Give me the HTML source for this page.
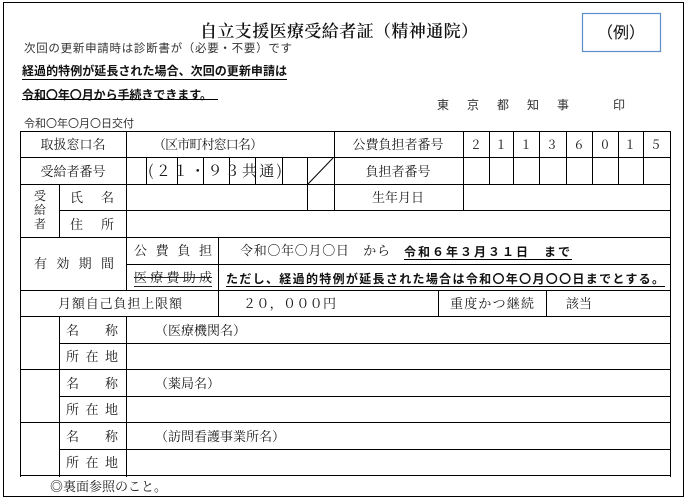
<!DOCTYPE html>
<html><head><meta charset="utf-8"><style>
html,body{margin:0;padding:0;background:#fff;width:691px;height:500px;overflow:hidden}
svg{display:block}
.m{font-family:"Noto Serif CJK SC","Noto Serif CJK JP",serif;font-size:13px;fill:#1a1a1a}
.g{font-family:"Liberation Sans","Noto Sans CJK JP",sans-serif;font-size:12px;font-weight:bold;fill:#111}
.s{font-family:"Liberation Sans","Noto Sans CJK JP",sans-serif;font-size:11.5px;fill:#333}
</style></head><body>
<svg width="691" height="500" viewBox="0 0 691 500" xmlns="http://www.w3.org/2000/svg">
<rect x="3.5" y="2.5" width="680" height="494" fill="none" stroke="#000" stroke-width="1"/>
<rect x="582.5" y="13.5" width="78" height="38" fill="none" stroke="#5b8fcc" stroke-width="1.2"/>
<text x="621" y="38" text-anchor="middle" style="font-family:'Noto Sans CJK JP',sans-serif;font-size:16px;fill:#111">（例）</text>
<text x="339" y="37" text-anchor="middle" class="m" style="font-size:17px;font-weight:600;fill:#111" textLength="278">自立支援医療受給者証（精神通院）</text>
<text x="24" y="52" class="s" textLength="268">次回の更新申請時は診断書が（必要・不要）です</text>
<text x="22" y="75" class="g" textLength="265">経過的特例が延長された場合、次回の更新申請は</text>
<line x1="22" y1="79.5" x2="287" y2="79.5" stroke="#000"/>
<text x="22" y="99" class="g" textLength="190">令和〇年〇月から手続きできます。</text>
<line x1="22" y1="99.5" x2="218" y2="99.5" stroke="#000"/>
<text x="437" y="109" class="s" style="font-size:12px" textLength="132">東 京 都 知 事</text>
<text x="613" y="109" class="s" style="font-size:12px">印</text>
<text x="24" y="127" class="s" style="font-size:11px">令和〇年〇月〇日交付</text>
<g stroke="#000" stroke-width="1" shape-rendering="crispEdges">
<line x1="20" y1="131.5" x2="670" y2="131.5"/>
<line x1="20" y1="157.5" x2="670" y2="157.5"/>
<line x1="20" y1="184.5" x2="670" y2="184.5"/>
<line x1="59" y1="210.5" x2="670" y2="210.5"/>
<line x1="20" y1="237.5" x2="670" y2="237.5"/>
<line x1="126" y1="264.5" x2="670" y2="264.5"/>
<line x1="20" y1="290.5" x2="670" y2="290.5"/>
<line x1="20" y1="316.5" x2="670" y2="316.5"/>
<line x1="59" y1="343.5" x2="670" y2="343.5"/>
<line x1="20" y1="369.5" x2="670" y2="369.5"/>
<line x1="59" y1="396.5" x2="670" y2="396.5"/>
<line x1="20" y1="422.5" x2="670" y2="422.5"/>
<line x1="59" y1="449.5" x2="670" y2="449.5"/>
<line x1="20" y1="475.5" x2="670" y2="475.5"/>
<line x1="20.5" y1="131" x2="20.5" y2="477"/>
<line x1="670.5" y1="131" x2="670.5" y2="477"/>
<line x1="126.5" y1="131" x2="126.5" y2="290"/>
<line x1="126.5" y1="316" x2="126.5" y2="477"/>
<line x1="59.5" y1="184" x2="59.5" y2="237"/>
<line x1="59.5" y1="316" x2="59.5" y2="477"/>
<line x1="146.5" y1="157" x2="146.5" y2="184"/>
<line x1="177.5" y1="157" x2="177.5" y2="184"/>
<line x1="203.5" y1="157" x2="203.5" y2="184"/>
<line x1="229.5" y1="157" x2="229.5" y2="184"/>
<line x1="255.5" y1="157" x2="255.5" y2="184"/>
<line x1="282.5" y1="157" x2="282.5" y2="184"/>
<line x1="307.5" y1="157" x2="307.5" y2="210"/>
<line x1="334.5" y1="131" x2="334.5" y2="210"/>
<line x1="463.5" y1="131" x2="463.5" y2="210"/>
<line x1="489.5" y1="131" x2="489.5" y2="184"/>
<line x1="513.5" y1="131" x2="513.5" y2="184"/>
<line x1="539.5" y1="131" x2="539.5" y2="184"/>
<line x1="566.5" y1="131" x2="566.5" y2="184"/>
<line x1="592.5" y1="131" x2="592.5" y2="184"/>
<line x1="618.5" y1="131" x2="618.5" y2="184"/>
<line x1="643.5" y1="131" x2="643.5" y2="184"/>
<line x1="218.5" y1="237" x2="218.5" y2="316"/>
<line x1="438.5" y1="290" x2="438.5" y2="316"/>
<line x1="546.5" y1="290" x2="546.5" y2="316"/>
</g>
<line x1="308" y1="184" x2="333" y2="158" stroke="#000"/>
<g class="m">
<text x="73" y="149" text-anchor="middle">取扱窓口名</text>
<text x="153" y="149" textLength="110">（区市町村窓口名）</text>
<text x="398" y="149" text-anchor="middle">公費負担者番号</text>
<text x="476" y="149" text-anchor="middle">2</text><text x="501" y="149" text-anchor="middle">1</text>
<text x="526" y="149" text-anchor="middle">1</text><text x="552" y="149" text-anchor="middle">3</text>
<text x="579" y="149" text-anchor="middle">6</text><text x="605" y="149" text-anchor="middle">0</text>
<text x="630" y="149" text-anchor="middle">1</text><text x="656" y="149" text-anchor="middle">5</text>
<text x="73" y="176" text-anchor="middle">受給者番号</text>
<text x="148" y="176" style="font-size:15px" textLength="134">(２１・９３共通)</text>
<text x="398" y="176" text-anchor="middle">負担者番号</text>
<text x="40" y="200" text-anchor="middle" style="font-size:12px">受</text>
<text x="40" y="214" text-anchor="middle" style="font-size:12px">給</text>
<text x="40" y="228" text-anchor="middle" style="font-size:12px">者</text>
<text x="70" y="202" textLength="44">氏　名</text>
<text x="398" y="202" text-anchor="middle">生年月日</text>
<text x="70" y="229" textLength="44">住　所</text>
<text x="34" y="268" textLength="80">有 効 期 間</text>
<text x="134" y="255" textLength="78">公 費 負 担</text>
<text x="134" y="282" textLength="78">医療費助成</text>
<text x="240" y="255" textLength="150">令和〇年〇月〇日　から</text>
<text x="58" y="308" textLength="124">月額自己負担上限額</text>
<text x="243" y="308" textLength="93">２０，０００円</text>
<text x="450" y="308" textLength="84">重度かつ継続</text>
<text x="566" y="308">該当</text>
<text x="66" y="335" textLength="52">名　　称</text>
<text x="155" y="335">（医療機関名）</text>
<text x="66" y="361" textLength="52">所 在 地</text>
<text x="66" y="388" textLength="52">名　　称</text>
<text x="155" y="388">（薬局名）</text>
<text x="66" y="414" textLength="52">所 在 地</text>
<text x="66" y="441" textLength="52">名　　称</text>
<text x="155" y="441">（訪問看護事業所名）</text>
<text x="66" y="467" textLength="52">所 在 地</text>
<text x="50" y="491">◎裏面参照のこと。</text>
</g>
<line x1="134" y1="277.5" x2="212" y2="277.5" stroke="#222"/>
<line x1="134" y1="286.5" x2="212" y2="286.5" stroke="#222"/>
<text x="404" y="256" class="g" textLength="166">令和６年３月３１日　まで</text>
<line x1="404" y1="259.5" x2="572" y2="259.5" stroke="#000"/>
<text x="226" y="283" class="g" textLength="438">ただし、経過的特例が延長された場合は令和〇年〇月〇〇日までとする。</text>
<line x1="226" y1="286.5" x2="665" y2="286.5" stroke="#000"/>
</svg>
</body></html>
